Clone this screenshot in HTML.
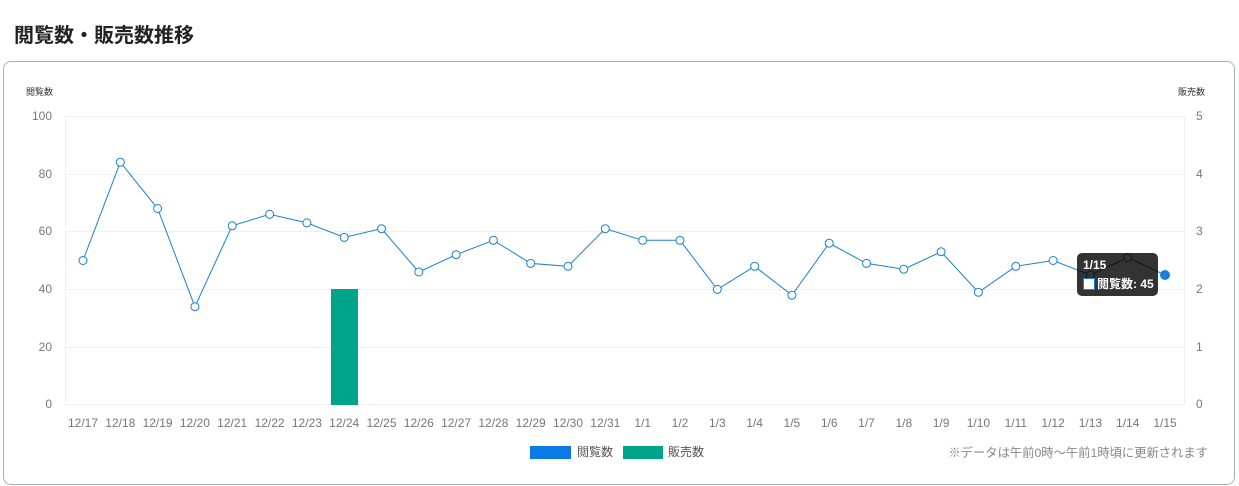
<!DOCTYPE html>
<html><head><meta charset="utf-8"><style>
body{margin:0;background:#fff;width:1239px;height:486px;overflow:hidden;font-family:"Liberation Sans","Noto Sans CJK JP",sans-serif;}
h1{position:absolute;left:14px;top:19px;margin:0;font-size:20px;font-weight:bold;color:#222;}
.card{position:absolute;left:3px;top:61px;width:1230px;height:422px;border:1px solid #a9b1b6;border-radius:8px;}
svg{position:absolute;left:0;top:0}
</style></head><body>
<h1>閲覧数・販売数推移</h1>
<div class="card"></div>
<svg width="1239" height="486" font-family="Liberation Sans, Noto Sans CJK JP, sans-serif">
<g stroke="#eef0f2" stroke-width="1">
<line x1="65" x2="1184" y1="116.5" y2="116.5"/><line x1="65" x2="1184" y1="174.5" y2="174.5"/>
<line x1="65" x2="1184" y1="231.5" y2="231.5"/><line x1="65" x2="1184" y1="289.5" y2="289.5"/>
<line x1="65" x2="1184" y1="347.5" y2="347.5"/><line x1="65" x2="1184" y1="404.5" y2="404.5"/>
<line x1="65.5" x2="65.5" y1="116" y2="405"/><line x1="1184.5" x2="1184.5" y1="116" y2="405"/>
</g>
<text x="26" y="95" font-size="9" fill="#333">閲覧数</text>
<text x="1178" y="95" font-size="9" fill="#333">販売数</text>
<g font-size="12" fill="#777" text-anchor="end">
<text x="52" y="120">100</text><text x="52" y="178">80</text><text x="52" y="235">60</text>
<text x="52" y="293">40</text><text x="52" y="351">20</text><text x="52" y="408">0</text>
</g>
<g font-size="12" fill="#777">
<text x="1196" y="120">5</text><text x="1196" y="178">4</text><text x="1196" y="235">3</text>
<text x="1196" y="293">2</text><text x="1196" y="351">1</text><text x="1196" y="408">0</text>
</g>
<rect x="331" y="289" width="27" height="116" fill="#00a48a"/>
<polyline fill="none" stroke="#1a7fd6" stroke-width="1" points="83,260.5 120.3,162.2 157.6,208.5 194.9,306.7 232.2,225.8 269.6,214.3 306.9,222.9 344.2,237.4 381.5,228.7 418.8,272 456.1,254.7 493.4,240.3 530.7,263.4 568,266.3 605.3,228.7 642.7,240.3 680,240.3 717.3,289.4 754.6,266.3 791.9,295.2 829.2,243.2 866.5,263.4 903.8,269.2 941.1,251.8 978.4,292.3 1015.8,266.3 1053.1,260.5 1090.4,275 1127.7,257.6 1165,275"/>
<g fill="#fff" stroke="#1a7fd6" stroke-width="1">
<circle cx="83" cy="260.5" r="4"/><circle cx="120.3" cy="162.2" r="4"/><circle cx="157.6" cy="208.5" r="4"/><circle cx="194.9" cy="306.7" r="4"/><circle cx="232.2" cy="225.8" r="4"/><circle cx="269.6" cy="214.3" r="4"/><circle cx="306.9" cy="222.9" r="4"/><circle cx="344.2" cy="237.4" r="4"/><circle cx="381.5" cy="228.7" r="4"/><circle cx="418.8" cy="272" r="4"/><circle cx="456.1" cy="254.7" r="4"/><circle cx="493.4" cy="240.3" r="4"/><circle cx="530.7" cy="263.4" r="4"/><circle cx="568" cy="266.3" r="4"/><circle cx="605.3" cy="228.7" r="4"/><circle cx="642.7" cy="240.3" r="4"/><circle cx="680" cy="240.3" r="4"/><circle cx="717.3" cy="289.4" r="4"/><circle cx="754.6" cy="266.3" r="4"/><circle cx="791.9" cy="295.2" r="4"/><circle cx="829.2" cy="243.2" r="4"/><circle cx="866.5" cy="263.4" r="4"/><circle cx="903.8" cy="269.2" r="4"/><circle cx="941.1" cy="251.8" r="4"/><circle cx="978.4" cy="292.3" r="4"/><circle cx="1015.8" cy="266.3" r="4"/><circle cx="1053.1" cy="260.5" r="4"/><circle cx="1090.4" cy="275" r="4"/><circle cx="1127.7" cy="257.6" r="4"/>
</g>
<circle cx="1165" cy="275" r="4.5" fill="#1a7fd6" stroke="#1a7fd6"/>
<rect x="1077" y="253" width="81" height="43" rx="5" fill="rgba(0,0,0,0.8)"/>
<text x="1083" y="269" font-size="12" font-weight="bold" fill="#fff">1/15</text>
<rect x="1083.5" y="278.5" width="11" height="11" fill="#fff" stroke="#1a7fd6"/>
<text x="1097" y="288" font-size="12" font-weight="bold" fill="#fff">閲覧数: 45</text>
<g font-size="12" fill="#777" text-anchor="middle">
<text x="83" y="427">12/17</text><text x="120.3" y="427">12/18</text><text x="157.6" y="427">12/19</text><text x="194.9" y="427">12/20</text><text x="232.2" y="427">12/21</text><text x="269.6" y="427">12/22</text><text x="306.9" y="427">12/23</text><text x="344.2" y="427">12/24</text><text x="381.5" y="427">12/25</text><text x="418.8" y="427">12/26</text><text x="456.1" y="427">12/27</text><text x="493.4" y="427">12/28</text><text x="530.7" y="427">12/29</text><text x="568" y="427">12/30</text><text x="605.3" y="427">12/31</text><text x="642.7" y="427">1/1</text><text x="680" y="427">1/2</text><text x="717.3" y="427">1/3</text><text x="754.6" y="427">1/4</text><text x="791.9" y="427">1/5</text><text x="829.2" y="427">1/6</text><text x="866.5" y="427">1/7</text><text x="903.8" y="427">1/8</text><text x="941.1" y="427">1/9</text><text x="978.4" y="427">1/10</text><text x="1015.8" y="427">1/11</text><text x="1053.1" y="427">1/12</text><text x="1090.4" y="427">1/13</text><text x="1127.7" y="427">1/14</text><text x="1165" y="427">1/15</text>
</g>
<rect x="530" y="446" width="41" height="13" fill="#0b7ae6"/>
<text x="577" y="456" font-size="12" fill="#555">閲覧数</text>
<rect x="623" y="446" width="40" height="13" fill="#00a48a"/>
<text x="668" y="456" font-size="12" fill="#555">販売数</text>
<text x="1208" y="457" font-size="12.3" fill="#888" text-anchor="end">※データは午前0時〜午前1時頃に更新されます</text>
</svg>
</body></html>
